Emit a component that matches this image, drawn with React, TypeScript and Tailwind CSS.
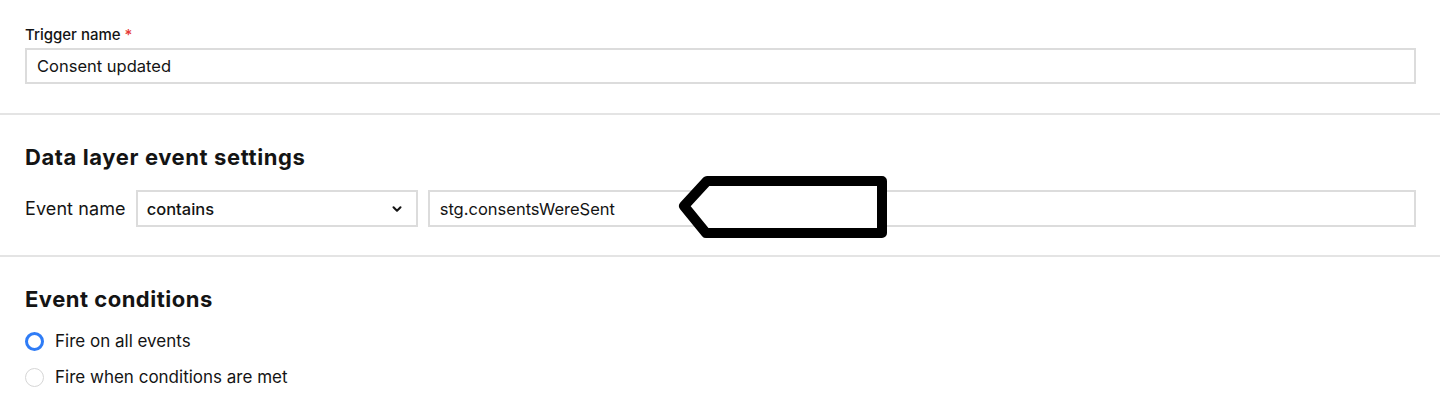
import { ChevronDown } from "lucide-react";

const font = { fontFamily: "Inter, 'Noto Sans', sans-serif" };

function Radio({ checked, label }: { checked?: boolean; label: string }) {
  return (
    <label className="flex items-center h-[24px] gap-[11px] cursor-pointer">
      <span
        className={`w-[19px] h-[19px] rounded-full box-border ${
          checked ? "border-[3px] border-[#2f7cf6]" : "border border-[#d6d6d6]"
        }`}
      />
      <span className="text-[17px] leading-[24px] text-[#141414]">{label}</span>
    </label>
  );
}

export default function App() {
  return (
    <div className="w-[1440px] h-[414px] bg-white relative overflow-hidden" style={font}>
      {/* Trigger name */}
      <div className="px-[25px] pt-[28px] pb-[29px] pr-[24px]">
        <div className="text-[15px] leading-[14px] font-medium text-[#141414] mb-[6px]">
          Trigger name <span className="text-[#e53935]">*</span>
        </div>
        <input
          defaultValue="Consent updated"
          className="w-full h-[36px] border-2 border-[#dcdcdc] px-[10px] text-[16.5px] text-[#141414] outline-none"
        />
      </div>
      <div className="h-[2px] bg-[#e4e4e4]" />

      {/* Data layer event settings */}
      <div className="px-[25px] pr-[24px] pt-[30px] pb-[28px]">
        <h2 className="text-[22px] leading-[24px] font-bold tracking-[0.6px] text-[#141414]">
          Data layer event settings
        </h2>
        <div className="flex items-center mt-[21px] h-[37px]">
          <span className="text-[18px] tracking-[0.1px] text-[#141414] mr-[10px]">Event name</span>
          <div className="w-[282px] h-[37px] border-2 border-[#dcdcdc] flex items-center justify-between pl-[9px] pr-[12px]">
            <span className="text-[16.5px] font-medium text-[#141414] pt-[2px]">contains</span>
            <ChevronDown size={14} strokeWidth={3.5} className="text-[#141414]" />
          </div>
          <input
            defaultValue="stg.consentsWereSent"
            className="flex-1 ml-[10px] h-[37px] border-2 border-[#dcdcdc] px-[10px] text-[16.5px] text-[#141414] outline-none"
          />
        </div>
      </div>
      <div className="h-[2px] bg-[#e4e4e4]" />

      {/* Event conditions */}
      <div className="px-[25px] pt-[30px]">
        <h2 className="text-[22px] leading-[24px] font-bold tracking-[0.5px] text-[#141414]">Event conditions</h2>
        <div className="mt-[18px] flex flex-col gap-[12px]">
          <Radio checked label="Fire on all events" />
          <Radio label="Fire when conditions are met" />
        </div>
      </div>

      {/* annotation arrow */}
      <svg className="absolute left-[670px] top-[170px]" width="225" height="75" viewBox="0 0 225 75">
        <path
          d="M37 11 L212 11 L212 63 L36 63 L14 36 Z"
          fill="white"
          stroke="black"
          strokeWidth="10"
          strokeLinejoin="round"
        />
      </svg>
    </div>
  );
}
